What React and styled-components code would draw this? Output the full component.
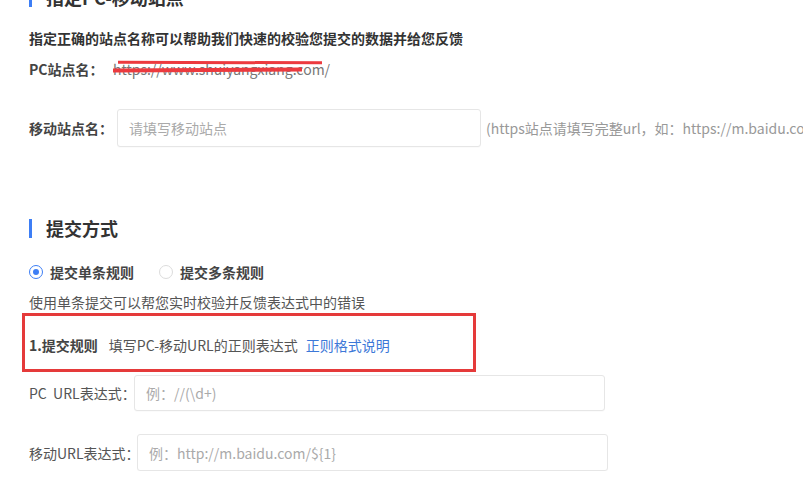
import styled, { createGlobalStyle } from "styled-components"

const GlobalStyle = createGlobalStyle`
  body {
    margin: 0;
    background: #fff;
    overflow: hidden;
    font-family: "Noto Sans CJK SC", "Microsoft YaHei", sans-serif;
    font-size: 14px;
    color: #555;
  }
`

const Page = styled.div`
  display: flex;
  flex-direction: column;
  padding-left: 29px;
  margin-top: -13px;
  width: 774px;
`

const SectionTitle = styled.h2`
  display: flex;
  align-items: center;
  gap: 14px;
  margin: 0;
  height: 20px;
  font-size: 18px;
  font-weight: 700;
  color: #333;
  line-height: 20px;
  margin-top: ${({ $top }) => $top || 0}px;

  &::before {
    content: "";
    display: block;
    width: 3px;
    height: 19px;
    background: #3d7ef5;
  }
`

const Desc = styled.p`
  margin: ${({ $top }) => $top || 0}px 0 0;
  line-height: 20px;
  height: 20px;
  font-weight: ${({ $bold }) => ($bold ? 700 : 400)};
  color: ${({ $bold }) => ($bold ? "#333" : "#555")};
  white-space: nowrap;
`

const FieldRow = styled.div`
  display: flex;
  align-items: center;
  margin-top: ${({ $top }) => $top || 0}px;
  white-space: nowrap;
`

const Label = styled.span`
  flex: none;
  width: ${({ $width }) => $width}px;
  line-height: 20px;
  font-weight: ${({ $bold }) => ($bold ? 700 : 400)};
  color: ${({ $bold }) => ($bold ? "#444" : "#555")};
`

const Input = styled.input`
  flex: none;
  box-sizing: border-box;
  width: ${({ $width }) => $width}px;
  height: ${({ $height }) => $height || 38}px;
  border: 1px solid #e6e6e6;
  border-radius: 3px;
  padding: 0 11px;
  font-family: inherit;
  font-size: 14px;
  color: #333;
  outline: none;
  box-shadow: 0 1px 1px rgba(0, 0, 0, 0.02);

  &::placeholder {
    color: #aaa;
  }
`

const Hint = styled.span`
  flex: none;
  margin-left: 5px;
  color: #999;
`

const Struck = styled.span`
  position: relative;
  display: inline-block;
  flex: none;
  line-height: 20px;
  color: #777;
`

const Scribble = styled.span`
  position: absolute;
  left: ${({ $left }) => $left}px;
  top: ${({ $top }) => $top}px;
  width: ${({ $width }) => $width}px;
  height: ${({ $height }) => $height}px;
  background: #ec3a3f;
  transform: rotate(${({ $rotate }) => $rotate || 0}deg);
`

const RadioGroup = styled.div`
  display: flex;
  align-items: center;
  gap: 25px;
  margin-top: ${({ $top }) => $top || 0}px;
  height: 20px;
`

const RadioItem = styled.label`
  display: flex;
  align-items: center;
  gap: 7px;
  font-weight: 700;
  color: #444;
  line-height: 20px;
`

const RadioDot = styled.span`
  box-sizing: border-box;
  width: 14px;
  height: 14px;
  border-radius: 50%;
  border: 1px solid ${({ $checked }) => ($checked ? "#3d7ef5" : "#dcdcdc")};
  display: flex;
  align-items: center;
  justify-content: center;

  &::after {
    content: "";
    width: 6px;
    height: 6px;
    border-radius: 50%;
    background: ${({ $checked }) => ($checked ? "#3d7ef5" : "transparent")};
  }
`

const RuleBox = styled.div`
  box-sizing: border-box;
  flex: none;
  display: flex;
  align-items: flex-start;
  gap: 11px;
  width: 454px;
  height: 59px;
  margin: 1px 0 0 -7px;
  padding: 19px 0 0 4px;
  border: 3px solid #e53a3a;
  line-height: 20px;
  white-space: nowrap;
`

const RuleTitle = styled.span`
  font-weight: 700;
  color: #444;
`

const RuleText = styled.span`
  color: #555;
`

const Link = styled.a`
  color: #3c78d8;
  text-decoration: none;
  margin-left: -3px;
`

export default function App() {
  return (
    <>
      <GlobalStyle />
      <Page>
        <SectionTitle>指定PC-移动站点</SectionTitle>
        <Desc $bold $top={21}>
          指定正确的站点名称可以帮助我们快速的校验您提交的数据并给您反馈
        </Desc>
        <FieldRow $top={11}>
          <Label $width={84} $bold>
            PC站点名：
          </Label>
          <Struck>
            https://www.shuiyangxiang.com/
            <Scribble $left={5} $top={2} $width={204} $height={3} $rotate={0.2} />
            <Scribble $left={0} $top={9} $width={189} $height={4} $rotate={-0.3} />
          </Struck>
        </FieldRow>
        <FieldRow $top={30}>
          <Label $width={88} $bold>
            移动站点名：
          </Label>
          <Input $width={364} $height={38} placeholder="请填写移动站点" />
          <Hint>(https站点请填写完整url，如：https://m.baidu.com)</Hint>
        </FieldRow>

        <SectionTitle $top={71}>提交方式</SectionTitle>
        <RadioGroup $top={24}>
          <RadioItem>
            <RadioDot $checked />
            提交单条规则
          </RadioItem>
          <RadioItem>
            <RadioDot />
            提交多条规则
          </RadioItem>
        </RadioGroup>
        <Desc $top={10}>使用单条提交可以帮您实时校验并反馈表达式中的错误</Desc>
        <RuleBox>
          <RuleTitle>1.提交规则</RuleTitle>
          <RuleText>填写PC-移动URL的正则表达式</RuleText>
          <Link href="#">正则格式说明</Link>
        </RuleBox>
        <FieldRow $top={3}>
          <Label $width={105}>PC&nbsp;&nbsp;URL表达式：</Label>
          <Input $width={471} $height={36} placeholder="例：//(\d+)" />
        </FieldRow>
        <FieldRow $top={23}>
          <Label $width={108}>移动URL表达式：</Label>
          <Input $width={471} $height={37} placeholder="例：http://m.baidu.com/${1}" />
        </FieldRow>
      </Page>
    </>
  )
}
